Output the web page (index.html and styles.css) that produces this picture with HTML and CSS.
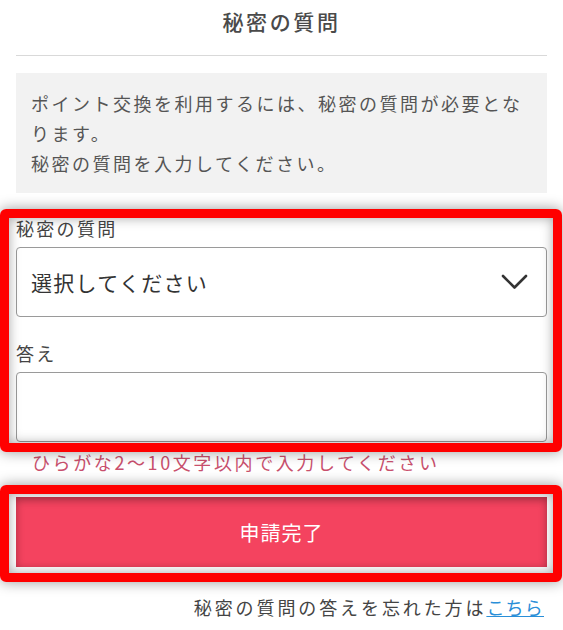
FILE: index.html
```html
<!DOCTYPE html>
<html lang="ja">
<head>
<meta charset="utf-8">
<title>秘密の質問</title>
<link rel="stylesheet" href="styles.css">
</head>
<body>
<div class="page">
  <header class="header">
    <h1 class="title">秘密の質問</h1>
  </header>
  <div class="notice">
    <p>ポイント交換を利用するには、秘密の質問が必要となります。</p>
    <p>秘密の質問を入力してください。</p>
  </div>
  <form class="form">
    <label class="label">秘密の質問</label>
    <div class="select">
      <span class="select-text">選択してください</span>
      <svg class="chevron" width="27" height="16" viewBox="0 0 27 16"><polyline points="2,2 13.5,13.5 25,2" fill="none" stroke="#333" stroke-width="2.6" stroke-linecap="round" stroke-linejoin="round"/></svg>
    </div>
    <label class="label label-answer">答え</label>
    <div class="input"></div>
    <p class="hint">ひらがな2〜10文字以内で入力してください</p>
    <div class="button">申請完了</div>
    <p class="footer">秘密の質問の答えを忘れた方は<a class="link" href="#">こちら</a></p>
  </form>
  <div class="mark mark-form"></div>
  <div class="mark mark-button"></div>
</div>
</body>
</html>
```
FILE: styles.css
```css
html, body {
  margin: 0;
  padding: 0;
  background: #fff;
}
body {
  font-family: "Noto Sans CJK JP", "Noto Sans", sans-serif;
  color: #444;
}
.page {
  position: relative;
  width: 563px;
  height: 630px;
  padding: 0 16px;
  box-sizing: border-box;
  overflow: hidden;
}
.header {
  height: 55px;
  border-bottom: 1px solid #d9d9d9;
  box-sizing: content-box;
}
.title {
  margin: 0;
  padding-top: 6px;
  font-size: 21px;
  line-height: 30px;
  font-weight: 500;
  letter-spacing: 2.6px;
  text-align: center;
  color: #4a4a4a;
}
.notice {
  margin-top: 17px;
  background: #f2f2f2;
  padding: 15px 15px;
  font-size: 18px;
  line-height: 30px;
  letter-spacing: 2.5px;
  color: #555;
}
.notice p {
  margin: 0;
}
.form {
  display: flex;
  flex-direction: column;
}
.label {
  display: block;
  margin-top: 23px;
  font-size: 18px;
  line-height: 24px;
  letter-spacing: 2.3px;
  color: #444;
}
.label-answer {
  margin-top: 24px;
}
.select {
  margin-top: 7px;
  height: 70px;
  box-sizing: border-box;
  border: 1px solid #9a9a9a;
  border-radius: 4px;
  display: flex;
  align-items: center;
  justify-content: space-between;
  padding: 0 18px 0 14px;
  background: #fff;
}
.select-text {
  font-size: 21px;
  letter-spacing: 1.3px;
  color: #333;
}
.chevron {
  display: block;
}
.input {
  margin-top: 7px;
  height: 70px;
  box-sizing: border-box;
  border: 1px solid #9a9a9a;
  border-radius: 4px;
  background: #fff;
}
.hint {
  margin: 8px 0 0;
  padding-left: 16px;
  font-size: 18px;
  line-height: 24px;
  letter-spacing: 2.6px;
  color: #c9506d;
}
.button {
  margin-top: 23px;
  height: 70px;
  background: #f4435f;
  color: #fff;
  font-size: 20px;
  letter-spacing: 1px;
  display: flex;
  align-items: center;
  justify-content: center;
  box-shadow: inset 0 3px 8px rgba(0, 0, 0, 0.25);
}
.footer {
  margin: 28px 0 0;
  padding-right: 3px;
  text-align: right;
  font-size: 18px;
  line-height: 24px;
  letter-spacing: 2.9px;
  color: #444;
}
.link {
  color: #2a8fd8;
  text-decoration: underline;
  letter-spacing: 1.2px;
}
.mark {
  position: absolute;
  left: 0;
  right: 1px;
  border: 9px solid #ff0000;
  border-radius: 6px;
  box-shadow: 0 0 14px rgba(0, 0, 0, 0.4), inset 0 0 12px rgba(0, 0, 0, 0.35);
  pointer-events: none;
}
.mark-form {
  top: 209px;
  height: 243px;
  box-sizing: border-box;
}
.mark-button {
  top: 485px;
  height: 97px;
  box-sizing: border-box;
}
```
